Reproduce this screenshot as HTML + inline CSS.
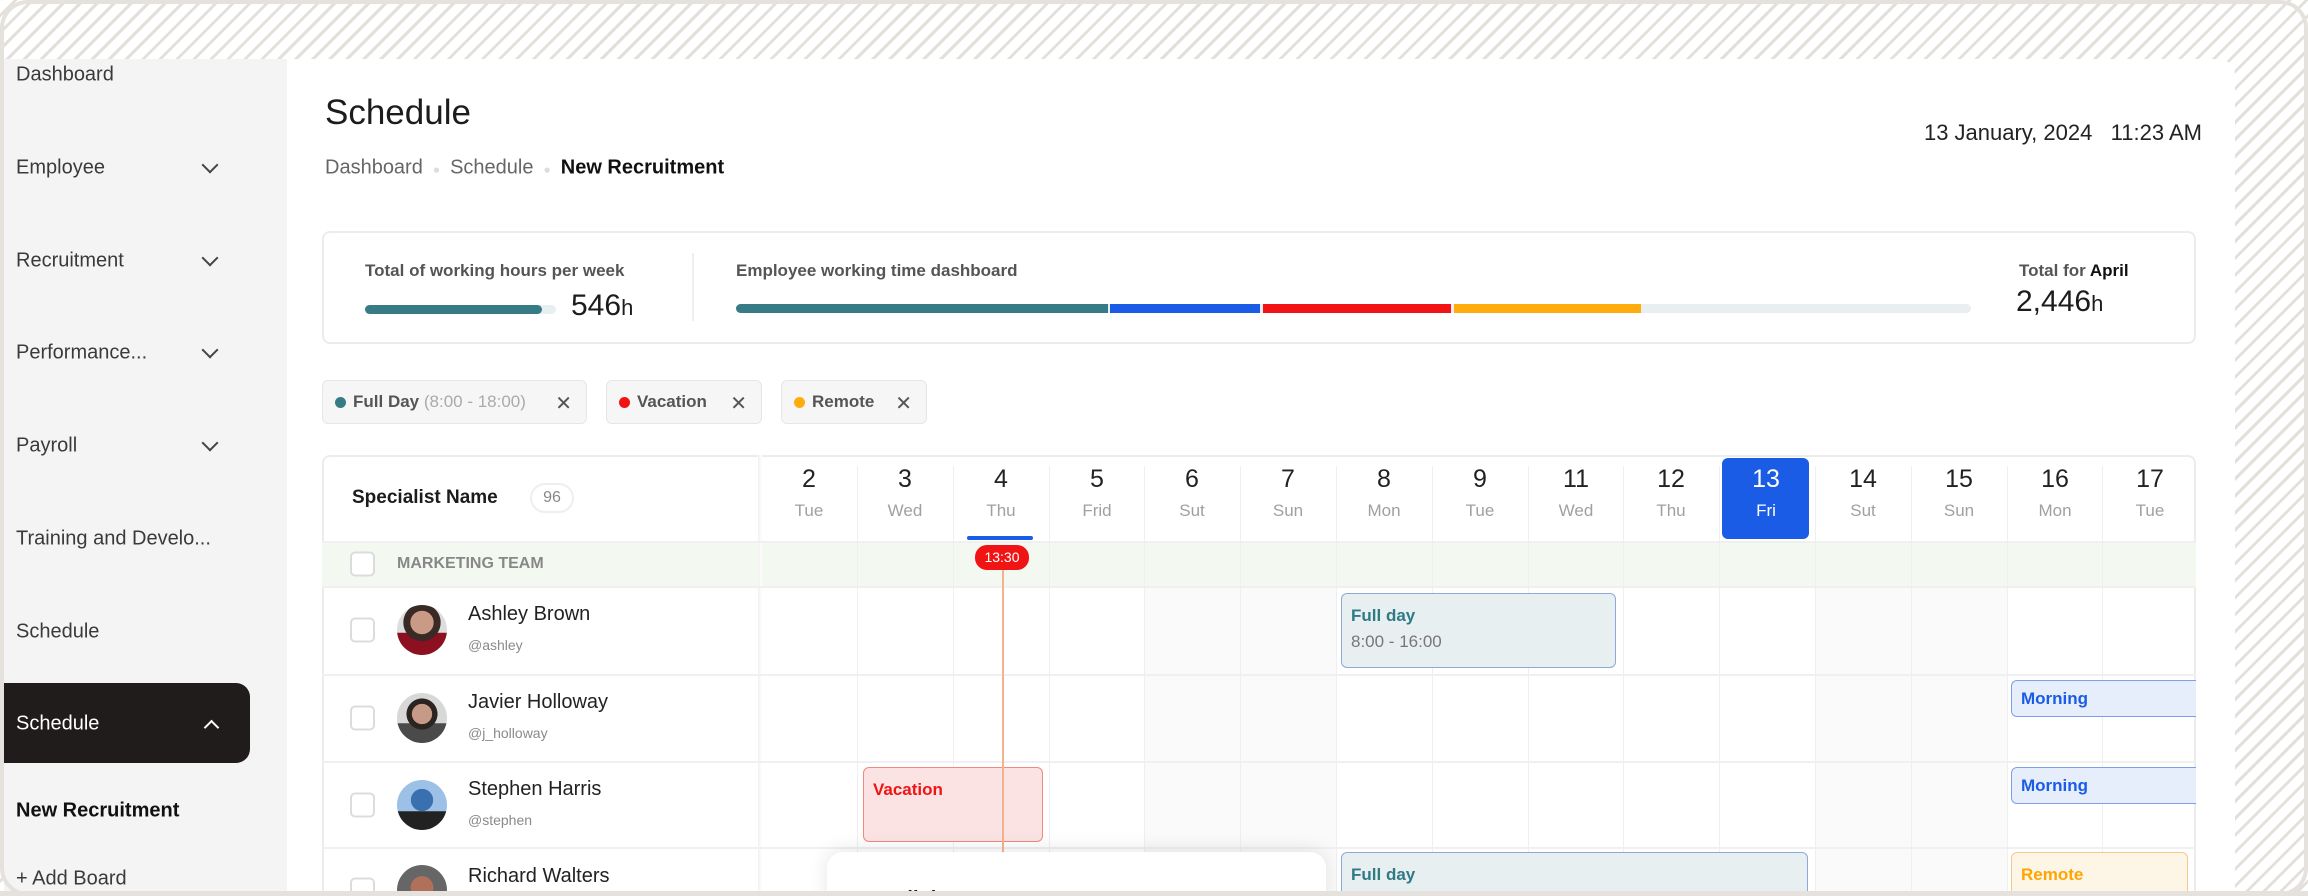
<!DOCTYPE html>
<html><head><meta charset="utf-8"><style>
*{box-sizing:border-box;margin:0;padding:0}
html,body{width:2308px;height:896px;overflow:hidden}
body{position:relative;font-family:"Liberation Sans",sans-serif;color:#1c1c1c;
background:#fff repeating-linear-gradient(-45deg,#fff 0 9px,#e3e0dc 9px 12px);}
#w{position:absolute;left:0;top:0;width:2308px;height:896px;overflow:hidden}
.a{position:absolute}
.frame{position:absolute;left:0;top:0;width:2308px;height:896px;border:4px solid #e5e2de;border-radius:28px;pointer-events:none}
.side{left:4px;top:59px;width:283px;height:832px;background:#f4f4f4}
.main{left:287px;top:59px;width:1948px;height:832px;background:#fff;border-top-right-radius:16px}
.si{position:absolute;left:16px;font-size:20px;color:#3a3a3a;transform:translateY(-50%);white-space:nowrap}
.chev{position:absolute;left:204px;width:12px;height:12px;border-right:2px solid #444;border-bottom:2px solid #444;transform:translateY(-75%) rotate(45deg)}
.vc{transform:translateY(-50%);white-space:nowrap}
.chip{position:absolute;top:380px;height:44px;background:#f6f6f6;border:1.5px solid #e6e6e6;border-radius:6px;font-size:17px;font-weight:bold;color:#555;display:flex;align-items:center;padding-left:12px}
.dot{width:11px;height:11px;border-radius:50%;margin-right:7px}
.x{position:absolute;right:14px;top:10px;font-size:20px;color:#555;font-weight:normal}
.col{position:absolute;top:465px;width:96px;text-align:center}
.col b{display:block;font-size:25px;font-weight:normal;color:#222;height:36px}
.col i{display:block;font-style:normal;font-size:17px;color:#a0a0a0}
.vl{position:absolute;width:1px;background:#efefef}
.hl{position:absolute;left:322px;width:1874px;height:2px;background:#f0f0f0}
.cb{position:absolute;left:350px;width:25px;height:25px;border:2px solid #dcdcdc;border-radius:5px;background:#fff;transform:translateY(-50%)}
.av{position:absolute;left:397px;width:50px;height:50px;border-radius:50%;transform:translateY(-50%)}
.nm{position:absolute;left:468px;font-size:20px;color:#222}
.hd{position:absolute;left:468px;font-size:14px;color:#8a8a8a}
.ev{position:absolute;border-radius:6px;font-size:17px;font-weight:bold;padding:12px 9px}
</style></head><body><div id="w">
<div class="a side"></div>
<div class="a main"></div>

<div class="si" style="top:75px">Dashboard</div>
<div class="si" style="top:168px">Employee</div><div class="chev" style="top:168px"></div>
<div class="si" style="top:261px">Recruitment</div><div class="chev" style="top:261px"></div>
<div class="si" style="top:353px">Performance...</div><div class="chev" style="top:353px"></div>
<div class="si" style="top:446px">Payroll</div><div class="chev" style="top:446px"></div>
<div class="si" style="top:539px">Training and Develo...</div>
<div class="si" style="top:632px">Schedule</div>
<div class="a" style="left:4px;top:683px;width:246px;height:80px;background:#1f1c1b;border-radius:0 14px 14px 0"></div>
<div class="si" style="top:724px;color:#fff">Schedule</div>
<div class="a" style="left:206px;top:722px;width:11px;height:11px;border-left:2px solid #fff;border-top:2px solid #fff;transform:rotate(45deg)"></div>
<div class="si" style="top:811px;font-weight:bold;color:#111">New Recruitment</div>
<div class="si" style="top:879px">+ Add Board</div>

<div class="a vc" style="left:325px;top:113px;font-size:35px">Schedule</div>
<div class="a vc" style="left:325px;top:168px;font-size:20px;color:#666">Dashboard<span style="color:#ddd;margin:0 10px;font-size:12px">●</span>Schedule<span style="color:#ddd;margin:0 10px;font-size:12px">●</span><b style="color:#111">New Recruitment</b></div>
<div class="a vc" style="right:106px;top:133px;font-size:22px;color:#222">13 January, 2024&nbsp;&nbsp;&nbsp;11:23 AM</div>

<div class="a" style="left:322px;top:231px;width:1874px;height:113px;border:2px solid #ececec;border-radius:8px"></div>
<div class="a vc" style="left:365px;top:271px;font-size:17px;color:#555;font-weight:bold">Total of working hours per week</div>
<div class="a" style="left:365px;top:305px;width:191px;height:9px;background:#e8eff1;border-radius:5px"><div style="width:177px;height:9px;background:#367b86;border-radius:5px"></div></div>
<div class="a vc" style="left:571px;top:306px;font-size:30px">546<span style="font-size:22px">h</span></div>
<div class="a" style="left:692px;top:253px;width:2px;height:68px;background:#efefef"></div>
<div class="a vc" style="left:736px;top:271px;font-size:17px;color:#555;font-weight:bold">Employee working time dashboard</div>
<div class="a" style="left:736px;top:304px;width:1235px;height:9px;background:#e9eef0;border-radius:5px;overflow:hidden">
<div class="a" style="left:0;top:0;width:372px;height:9px;background:#367b86"></div>
<div class="a" style="left:374px;top:0;width:150px;height:9px;background:#1a5ce6"></div>
<div class="a" style="left:527px;top:0;width:188px;height:9px;background:#f01414"></div>
<div class="a" style="left:718px;top:0;width:187px;height:9px;background:#ffad0d"></div></div>
<div class="a vc" style="left:2019px;top:271px;font-size:17px;color:#555;font-weight:bold">Total for <span style="color:#111">April</span></div>
<div class="a vc" style="left:2016px;top:302px;font-size:30px">2,446<span style="font-size:22px">h</span></div>

<div class="chip" style="left:322px;width:265px"><span class="dot" style="background:#367b86"></span>Full Day&nbsp;<span style="font-weight:normal;color:#aaa">(8:00 - 18:00)</span><span class="x">✕</span></div>
<div class="chip" style="left:606px;width:156px"><span class="dot" style="background:#f01414"></span>Vacation<span class="x">✕</span></div>
<div class="chip" style="left:781px;width:146px"><span class="dot" style="background:#ffad0d"></span>Remote<span class="x">✕</span></div>

<!-- table -->
<div class="a" style="left:322px;top:455px;width:1874px;height:436px;border:2px solid #ececec;border-bottom:none;border-radius:8px 8px 0 0"></div>
<div class="a" style="left:322px;top:542px;width:1874px;height:45px;background:#f3f9f1"></div>
<div class="a" style="left:1144px;top:587px;width:192px;height:304px;background:#fafafa"></div>
<div class="a" style="left:1815px;top:587px;width:192px;height:304px;background:#fafafa"></div>
<div class="a" style="left:758px;top:455px;width:4px;height:436px;background:linear-gradient(90deg,#f0f0f0,#fff)"></div>
<div class="hl" style="top:541px"></div>
<div class="hl" style="top:586px"></div>
<div class="hl" style="top:674px"></div>
<div class="hl" style="top:761px"></div>
<div class="hl" style="top:847px"></div>
<div class="vl" style="left:857px;top:466px;height:425px"></div>
<div class="vl" style="left:953px;top:466px;height:425px"></div>
<div class="vl" style="left:1049px;top:466px;height:425px"></div>
<div class="vl" style="left:1144px;top:466px;height:425px"></div>
<div class="vl" style="left:1240px;top:466px;height:425px"></div>
<div class="vl" style="left:1336px;top:466px;height:425px"></div>
<div class="vl" style="left:1432px;top:466px;height:425px"></div>
<div class="vl" style="left:1528px;top:466px;height:425px"></div>
<div class="vl" style="left:1623px;top:466px;height:425px"></div>
<div class="vl" style="left:1719px;top:466px;height:425px"></div>
<div class="vl" style="left:1815px;top:466px;height:425px"></div>
<div class="vl" style="left:1911px;top:466px;height:425px"></div>
<div class="vl" style="left:2007px;top:466px;height:425px"></div>
<div class="vl" style="left:2102px;top:466px;height:425px"></div>

<div class="a vc" style="left:352px;top:498px;font-size:19px;font-weight:bold">Specialist Name</div>
<div class="a" style="left:530px;top:483px;width:44px;height:30px;border:2px solid #eee;border-radius:15px;text-align:center;font-size:16px;line-height:26px;color:#888">96</div>
<div class="cb" style="top:564px"></div>
<div class="a vc" style="left:397px;top:564px;font-size:16px;color:#888;font-weight:bold">MARKETING TEAM</div>

<div class="a" style="left:1722px;top:458px;width:87px;height:81px;background:#1a5ce6;border-radius:6px"></div>
<div class="col" style="left:761px"><b>2</b><i>Tue</i></div>
<div class="col" style="left:857px"><b>3</b><i>Wed</i></div>
<div class="col" style="left:953px"><b>4</b><i>Thu</i></div>
<div class="col" style="left:1049px"><b>5</b><i>Frid</i></div>
<div class="col" style="left:1144px"><b>6</b><i>Sut</i></div>
<div class="col" style="left:1240px"><b>7</b><i>Sun</i></div>
<div class="col" style="left:1336px"><b>8</b><i>Mon</i></div>
<div class="col" style="left:1432px"><b>9</b><i>Tue</i></div>
<div class="col" style="left:1528px"><b>11</b><i>Wed</i></div>
<div class="col" style="left:1623px"><b>12</b><i>Thu</i></div>
<div class="col" style="left:1718px"><b style="color:#fff">13</b><i style="color:#fff">Fri</i></div>
<div class="col" style="left:1815px"><b>14</b><i>Sut</i></div>
<div class="col" style="left:1911px"><b>15</b><i>Sun</i></div>
<div class="col" style="left:2007px"><b>16</b><i>Mon</i></div>
<div class="col" style="left:2102px"><b>17</b><i>Tue</i></div>
<div class="a" style="left:967px;top:536px;width:66px;height:4px;background:#1a5ce6;border-radius:2px"></div>

<!-- rows -->
<div class="cb" style="top:630px"></div>
<div class="av" style="top:630px;background:radial-gradient(circle at 50% 35%,#c99a85 0 28%,#3a2a25 29% 45%,transparent 46%),linear-gradient(#ddd 55%,#8c1020 56%)"></div>
<div class="nm" style="top:603px">Ashley Brown</div><div class="hd" style="top:637px">@ashley</div>
<div class="cb" style="top:718px"></div>
<div class="av" style="top:718px;background:radial-gradient(circle at 50% 42%,#c69a86 0 26%,#2c2420 27% 40%,transparent 41%),linear-gradient(#d8d8d8 60%,#4a4a4a 61%)"></div>
<div class="nm" style="top:691px">Javier Holloway</div><div class="hd" style="top:725px">@j_holloway</div>
<div class="cb" style="top:805px"></div>
<div class="av" style="top:805px;background:radial-gradient(circle at 50% 40%,#3a6fb0 0 28%,transparent 29%),linear-gradient(#9cc0e6 62%,#222 63%)"></div>
<div class="nm" style="top:778px">Stephen Harris</div><div class="hd" style="top:812px">@stephen</div>
<div class="cb" style="top:890px"></div>
<div class="av" style="top:890px;background:radial-gradient(circle at 50% 45%,#b0705a 0 30%,#666 31%)"></div>
<div class="nm" style="top:865px">Richard Walters</div>

<!-- events -->
<div class="ev" style="left:1341px;top:593px;width:275px;height:75px;background:#e8eff1;border:1.5px solid #8fa9d6;color:#2f7a85">Full day<div style="font-weight:normal;color:#777;margin-top:6px">8:00 - 16:00</div></div>
<div class="ev" style="left:2011px;top:680px;width:185px;height:37px;background:#e6eefc;border:1.5px solid #7fa0e8;border-right:none;border-radius:6px 0 0 6px;color:#1a5ce6;padding-top:8px">Morning</div>
<div class="ev" style="left:863px;top:767px;width:180px;height:75px;background:#fbe3e3;border:1.5px solid #f08a7a;color:#f01414">Vacation</div>
<div class="ev" style="left:2011px;top:767px;width:185px;height:37px;background:#e6eefc;border:1.5px solid #7fa0e8;border-right:none;border-radius:6px 0 0 6px;color:#1a5ce6;padding-top:8px">Morning</div>
<div class="ev" style="left:1341px;top:852px;width:467px;height:60px;background:#e8eff1;border:1.5px solid #8fa9d6;color:#2f7a85">Full day</div>
<div class="ev" style="left:2011px;top:852px;width:177px;height:60px;background:#fdf5e6;border:1.5px solid #f5c88a;color:#ffa500">Remote</div>

<div class="a" style="left:1002px;top:565px;width:2px;height:290px;background:#f5b38c"></div>
<div class="a" style="left:975px;top:545px;width:54px;height:25px;background:#f01414;border-radius:12px;color:#fff;font-size:14px;text-align:center;line-height:25px">13:30</div>

<div class="a" style="left:827px;top:852px;width:499px;height:60px;background:#fff;border-radius:16px;box-shadow:0 -2px 20px rgba(0,0,0,0.1)"><div style="position:absolute;left:56px;top:36px;font-size:20px;font-weight:bold">Full day</div></div>

<div class="a" style="left:0;top:891px;width:2308px;height:5px;background:#e5e2de"></div>
<div class="frame"></div>
</div></body></html>
